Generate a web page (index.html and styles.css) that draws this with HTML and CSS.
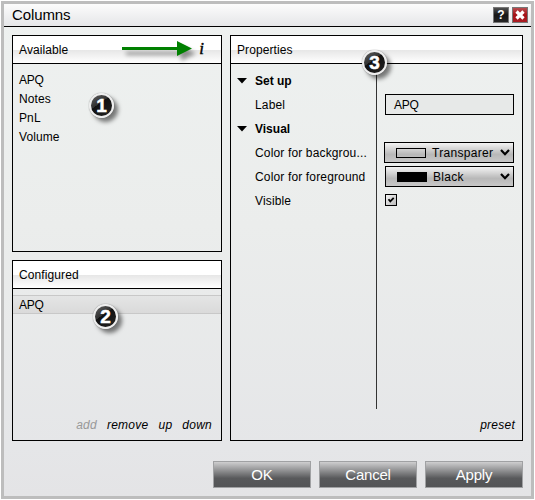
FILE: index.html
```html
<!DOCTYPE html>
<html lang="en">
<head>
<meta charset="utf-8">
<title>Columns</title>
<link rel="stylesheet" href="styles.css">
</head>
<body>
<div class="window">
  <header class="titlebar">
    <h1>Columns</h1>
    <div class="tools">
      <button class="tool help" aria-label="Help">?</button>
      <button class="tool close" aria-label="Close"><svg width="14" height="14" viewBox="0 0 14 14"><path d="M3.5 3.5l7 7M10.5 3.5l-7 7" stroke="#fff" stroke-width="3.2"/></svg></button>
    </div>
  </header>
  <main class="panels">
    <section class="panel available">
      <h2>Available<i class="info">i</i></h2>
      <ul class="list"><li class="caps">APQ</li><li>Notes</li><li>PnL</li><li>Volume</li></ul>
    </section>
    <section class="panel configured">
      <h2>Configured</h2>
      <ul class="list"><li class="selected caps">APQ</li></ul>
      <div class="actions"><span class="disabled">add</span><span>remove</span><span>up</span><span>down</span></div>
    </section>
    <section class="panel properties">
      <h2>Properties</h2>
      <div class="grid">
        <div class="names">
          <div class="group"><svg width="10" height="6" viewBox="0 0 10 6"><path d="M0 0h10L5 5.5z"/></svg>Set up</div>
          <div class="name">Label</div>
          <div class="group"><svg width="10" height="6" viewBox="0 0 10 6"><path d="M0 0h10L5 5.5z"/></svg>Visual</div>
          <div class="name">Color for backgrou...</div>
          <div class="name">Color for foreground</div>
          <div class="name">Visible</div>
        </div>
        <div class="values">
          <div class="field caps">APQ</div>
          <div class="select wide"><span class="swatch"></span><span class="choice">Transparer</span><svg width="10" height="7" viewBox="0 0 10 7"><path d="M1 1l4 4.2L9 1" fill="none" stroke="#000" stroke-width="2.2"/></svg></div>
          <div class="select"><span class="swatch black"></span><span class="choice">Black</span><svg width="10" height="7" viewBox="0 0 10 7"><path d="M1 1l4 4.2L9 1" fill="none" stroke="#000" stroke-width="2.2"/></svg></div>
          <div class="check"><svg width="8" height="8" viewBox="0 0 8 8"><path d="M1.5 3.2l1.8 2.2L6.7 1.8" fill="none" stroke="#000" stroke-width="1.8"/></svg></div>
        </div>
      </div>
      <div class="actions"><span>preset</span></div>
    </section>
  </main>
  <footer class="buttons"><button>OK</button><button>Cancel</button><button>Apply</button></footer>
</div>
<svg class="arrow" width="76" height="30" viewBox="0 0 76 30"><path d="M2 7h55V1l15 7.5L57 16v-6H2z" fill="#008000"/></svg>
<span class="badge one">1</span>
<span class="badge two">2</span>
<span class="badge three">3</span>
</body>
</html>
```

FILE: styles.css
```css
* { box-sizing: border-box; }
body { margin: 0; padding: 1px; background: #fff; font: 12px/19px "Liberation Sans", Arial, sans-serif; color: #000; }
h1, h2, ul { margin: 0; padding: 0; font-weight: normal; list-style: none; }
.window { width: 533px; height: 498px; border: 3px solid #bdbdbd; background: linear-gradient(#eef1f0, #ebedec 45%, #e5e6e8 90%, #e4e4e6); }
.titlebar { height: 23px; padding: 0 3px 0 8px; display: flex; justify-content: space-between; border-bottom: 1px solid #000; background: linear-gradient(#fcfcfc, #e5e6e8); }
h1 { font-size: 15px; line-height: 22px; letter-spacing: -.1px; }
.tools { display: flex; gap: 3px; padding-top: 3px; }
.tool { width: 16px; height: 16px; padding: 0; border: 1px solid #777; color: #fff; font: bold 12px/14px "Liberation Sans", Arial, sans-serif; }
.tool svg { display: block; }
.help { background: linear-gradient(#505050, #161616 50%, #262626); }
.close { background: linear-gradient(#b84d50, #a51116 50%, #aa1e24); }
.panels { display: grid; grid-template-columns: 210px 293px; grid-template-rows: 217px 181px; gap: 8px; padding: 8px 8px 0; }
.panel { border: 1px solid #000; display: flex; flex-direction: column; min-width: 0; }
.properties { grid-column: 2; grid-row: 1 / 3; }
h2 { height: 28px; flex: none; display: flex; justify-content: space-between; padding: 0 17px 0 6px; font-size: 12px; line-height: 28px; letter-spacing: .1px; border-bottom: 1px solid #000; background: linear-gradient(#fff 0 50%, #e6e6e6 51%, #fff); }
.info { font: italic 17px/25px "Liberation Serif", serif; -webkit-text-stroke: .4px #000; }
.list { padding-top: 6px; }
.list li { height: 19px; padding-left: 6px; line-height: 20px; letter-spacing: .1px; }
.list .selected { border: solid #c8c8c8; border-width: 1px 0; background: linear-gradient(#e4e5e5, #dadada); line-height: 18px; }
.list .caps, .caps { letter-spacing: -.3px; }
.actions { display: flex; gap: 10px; justify-content: flex-end; margin-top: auto; padding: 0 9px 5px 0; font-style: italic; line-height: 20px; letter-spacing: .25px; }
.properties .actions { padding-right: 7px; }
.disabled { color: #999; }
.grid { display: flex; height: 345px; }
.names { width: 146px; padding-top: 5px; border-right: 1px solid #333; line-height: 24px; letter-spacing: .15px; }
.name { height: 24px; padding-left: 24px; white-space: nowrap; }
.group { height: 24px; font-weight: bold; display: flex; align-items: center; gap: 8px; padding-left: 6px; letter-spacing: 0; }
.values { padding: 30px 0 0 8px; width: 137px; display: flex; flex-direction: column; }
.field { height: 21px; border: 1px solid #000; background: #e7e9e8; padding-left: 8px; line-height: 20px; }
.select { height: 21px; margin-top: 3px; border: 1px solid #000; padding: 0 3px 0 11px; display: flex; align-items: center; background: linear-gradient(#f4f4f4, #b8b8b8 60%, #c8c8c8); font-size: 12px; }
.select.wide { margin: 27px 0 0 -1px; }
.swatch { width: 30px; height: 10px; border: 1px solid #000; margin-right: 6px; }
.swatch.black { background: #000; }
.choice { flex: 1; padding-top: 1px; letter-spacing: .3px; }
.check { width: 12px; height: 12px; margin-top: 7px; border: 1px solid #000; display: grid; place-items: center; background: linear-gradient(135deg, #f4f4f4, #bbb); }
.buttons { display: flex; justify-content: flex-end; gap: 8px; padding: 20px 8px 0 0; }
.buttons button { width: 98px; height: 27px; padding: 0; border: 1px solid #a0a1a3; background: linear-gradient(#cececf, #58595b 65%, #535456); color: #fff; font: 15px/25px "Liberation Sans", Arial, sans-serif; letter-spacing: -.2px; }
.arrow { position: absolute; left: 120px; top: 40px; overflow: visible; filter: drop-shadow(4px 5px 2px rgba(0,0,0,.4)); }
.badge { position: absolute; width: 25px; height: 25px; border: 2px solid #eee; border-radius: 50%; background: linear-gradient(145deg, #626262, #303030 40%, #111 41%, #222); box-shadow: 0 0 1px #555, 4px 4px 4px rgba(0,0,0,.5); color: #fff; font: bold 19px/21px "Liberation Sans", Arial, sans-serif; text-align: center; -webkit-text-stroke: .5px #fff; }
.one { left: 89px; top: 93px; }
.two { left: 93px; top: 304px; }
.three { left: 362px; top: 50px; }
```
